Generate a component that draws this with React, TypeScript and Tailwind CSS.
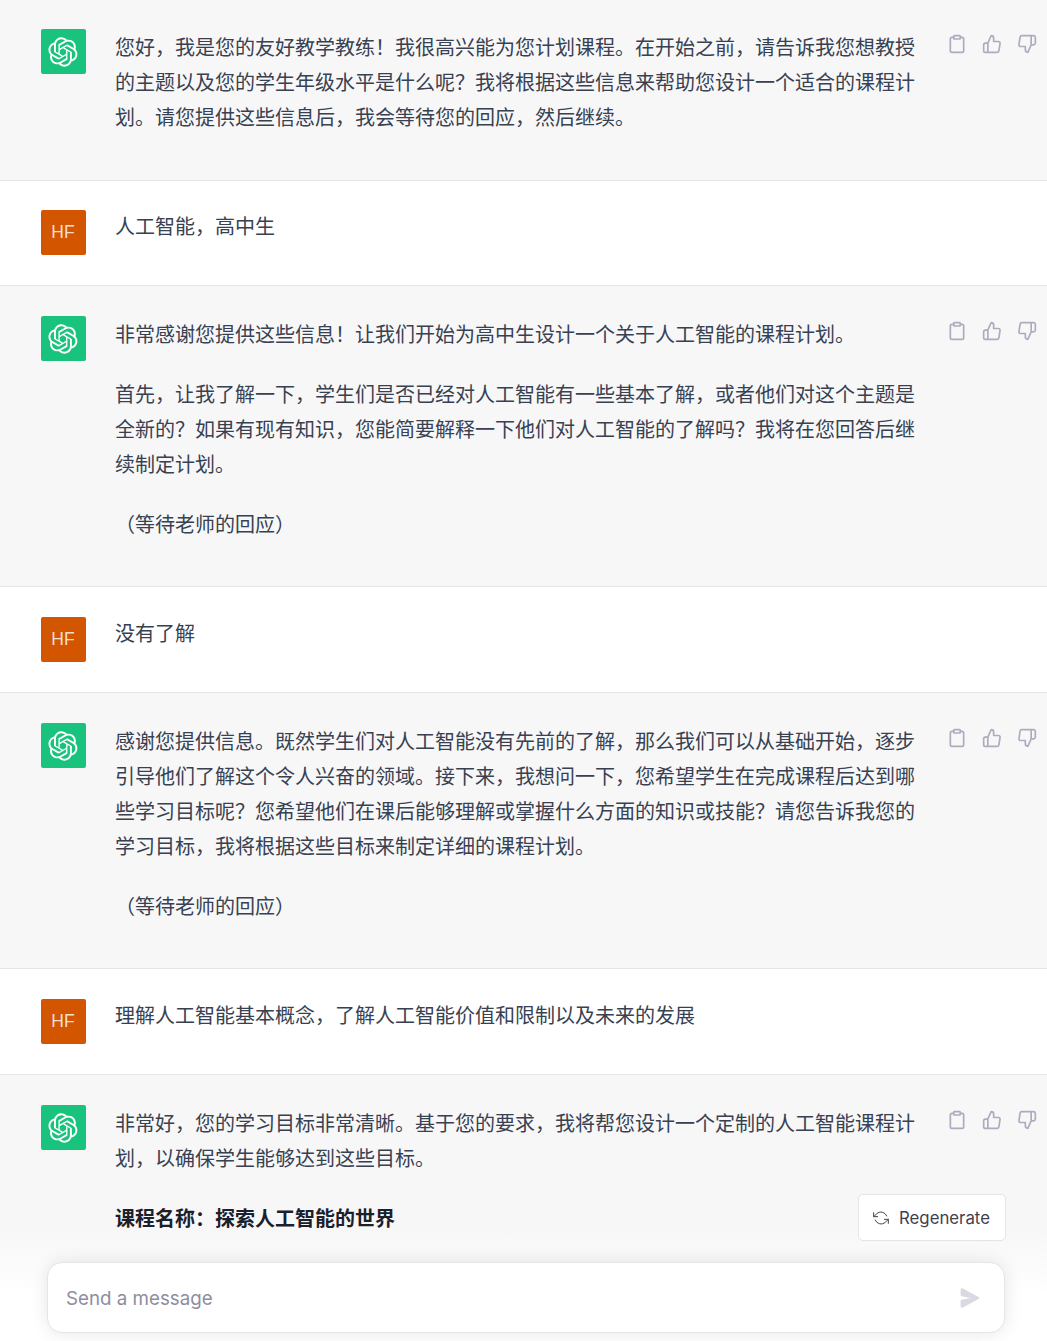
import type { ReactNode } from 'react';

const LOGO =
  'M37.5324 16.8707C37.9808 15.5241 38.1363 14.0974 37.9886 12.6859C37.8409 11.2744 37.3934 9.91076 36.676 8.68622C35.6126 6.83404 33.9882 5.3676 32.0373 4.4985C30.0864 3.62941 27.9098 3.40259 25.8215 3.85078C24.8796 2.7893 23.7219 1.94125 22.4257 1.36341C21.1295 0.785575 19.7249 0.491269 18.3058 0.500197C16.1708 0.495044 14.0893 1.16803 12.3614 2.42214C10.6335 3.67624 9.34853 5.44666 8.6917 7.47815C7.30085 7.76286 5.98686 8.3414 4.8377 9.17505C3.68854 10.0087 2.73073 11.0782 2.02839 12.312C0.956464 14.1591 0.498905 16.2988 0.721698 18.4228C0.944492 20.5467 1.83612 22.5449 3.268 24.1293C2.81966 25.4759 2.66413 26.9026 2.81182 28.3141C2.95951 29.7256 3.40701 31.0892 4.12437 32.3138C5.18791 34.1659 6.8123 35.6322 8.76321 36.5013C10.7141 37.3704 12.8907 37.5973 14.9789 37.1492C15.9208 38.2107 17.0786 39.0587 18.3747 39.6366C19.6709 40.2144 21.0755 40.5087 22.4946 40.4998C24.6307 40.5054 26.7133 39.8321 28.4418 38.5772C30.1704 37.3223 31.4556 35.5506 32.1119 33.5179C33.5027 33.2332 34.8167 32.6547 35.9659 31.821C37.115 30.9874 38.0728 29.9178 38.7752 28.684C39.8458 26.8371 40.3023 24.6979 40.0789 22.5748C39.8556 20.4517 38.9639 18.4544 37.5324 16.8707ZM22.4978 37.8849C20.7443 37.8874 19.0459 37.2733 17.6994 36.1501C17.7601 36.117 17.8666 36.0586 17.936 36.0161L25.9004 31.4156C26.1003 31.3019 26.2663 31.137 26.3813 30.9378C26.4964 30.7386 26.5563 30.5124 26.5549 30.2825V19.0542L29.9213 20.998C29.9389 21.0068 29.9541 21.0198 29.9656 21.0359C29.977 21.052 29.9842 21.0707 29.9867 21.0902V30.3889C29.9842 32.375 29.1946 34.2791 27.7909 35.6841C26.3872 37.0892 24.4838 37.8806 22.4978 37.8849ZM6.39227 31.0064C5.51397 29.4888 5.19742 27.7107 5.49804 25.9832C5.55718 26.0187 5.66048 26.0818 5.73461 26.1244L13.699 30.7248C13.8975 30.8408 14.1233 30.902 14.3532 30.902C14.583 30.902 14.8088 30.8408 15.0073 30.7248L24.731 25.1103V28.9979C24.7321 29.0177 24.7283 29.0376 24.7199 29.0556C24.7115 29.0736 24.6988 29.0893 24.6829 29.1012L16.6317 33.7497C14.9096 34.7416 12.8643 35.0097 10.9447 34.4954C9.02506 33.9811 7.38785 32.7263 6.39227 31.0064ZM4.29707 13.6194C5.17156 12.0998 6.55279 10.9364 8.19885 10.3327C8.19885 10.4013 8.19491 10.5228 8.19491 10.6071V19.808C8.19351 20.0378 8.25334 20.2638 8.36823 20.4629C8.48312 20.6619 8.64893 20.8267 8.84863 20.9404L18.5723 26.5542L15.206 28.4979C15.1894 28.5089 15.1703 28.5155 15.1505 28.5173C15.1307 28.5191 15.1107 28.516 15.0924 28.5082L7.04046 23.8557C5.32135 22.8601 4.06716 21.2235 3.55289 19.3046C3.03862 17.3858 3.30624 15.3413 4.29707 13.6194ZM31.955 20.0556L22.2312 14.4411L25.5976 12.4981C25.6142 12.4872 25.6333 12.4805 25.6531 12.4787C25.6729 12.4769 25.6928 12.4801 25.7111 12.4879L33.7631 17.1364C34.9967 17.849 36.0017 18.8982 36.6606 20.1613C37.3194 21.4244 37.6047 22.849 37.4832 24.2684C37.3617 25.6878 36.8382 27.0432 35.9743 28.1759C35.1103 29.3086 33.9415 30.1717 32.6047 30.6641C32.6047 30.5947 32.6047 30.4733 32.6047 30.3889V21.188C32.6066 20.9586 32.5474 20.7328 32.4332 20.5338C32.319 20.3348 32.154 20.1698 31.955 20.0556ZM35.3055 15.0128C35.2464 14.9765 35.1431 14.9142 35.069 14.8717L27.1045 10.2712C26.906 10.1554 26.6803 10.0943 26.4504 10.0943C26.2206 10.0943 25.9948 10.1554 25.7963 10.2712L16.0726 15.8858V11.9982C16.0715 11.9783 16.0753 11.9585 16.0837 11.9405C16.0921 11.9225 16.1048 11.9068 16.1207 11.8949L24.1719 7.25025C25.4053 6.53903 26.8158 6.19376 28.2383 6.25482C29.6608 6.31589 31.0364 6.78077 32.2044 7.59508C33.3723 8.40939 34.2842 9.53945 34.8334 10.8531C35.3826 12.1667 35.5464 13.6095 35.3055 15.0128ZM14.2424 21.9419L10.8752 19.9981C10.8576 19.9893 10.8423 19.9763 10.8309 19.9602C10.8195 19.9441 10.8122 19.9254 10.8098 19.9058V10.6071C10.8107 9.18295 11.2173 7.78848 11.9819 6.58696C12.7466 5.38544 13.8377 4.42659 15.1275 3.82264C16.4173 3.21869 17.8524 2.99464 19.2649 3.1767C20.6775 3.35876 22.0089 3.93941 23.1034 4.85067C23.0427 4.88379 22.937 4.94215 22.8668 4.98473L14.9024 9.58517C14.7025 9.69878 14.5366 9.86356 14.4215 10.0626C14.3065 10.2616 14.2466 10.4877 14.2479 10.7175L14.2424 21.9419ZM16.071 17.9991L20.4018 15.4978L24.7325 17.9975V22.9985L20.4018 25.4983L16.071 22.9985V17.9991Z';

function Avatar({ user }: { user?: boolean }) {
  if (user) {
    return (
      <div className="flex h-[45px] w-[45px] shrink-0 items-center justify-center rounded-[2px] bg-[#d45500] pr-[1px] text-[17.5px] text-[#f5dfd0] [font-family:'Liberation_Sans',sans-serif]">
        HF
      </div>
    );
  }
  return (
    <div className="flex h-[45px] w-[45px] shrink-0 items-center justify-center rounded-[2px] bg-[#19c37d] pr-[2px]">
      <svg width="30" height="30" viewBox="0 0 41 41" fill="white">
        <path d={LOGO} />
      </svg>
    </div>
  );
}

function Actions() {
  return (
    <div className="ml-[31px] flex shrink-0 gap-[15px] pt-[5px] text-[#acacbe]">
      <svg className="h-5 w-5" viewBox="0 0 24 24" fill="none" stroke="currentColor" strokeWidth="2" strokeLinecap="round" strokeLinejoin="round">
        <path d="M16 4h2a2 2 0 0 1 2 2v14a2 2 0 0 1-2 2H6a2 2 0 0 1-2-2V6a2 2 0 0 1 2-2h2" />
        <rect x="8" y="2" width="8" height="4" rx="1" ry="1" />
      </svg>
      <svg className="h-5 w-5" viewBox="0 0 24 24" fill="none" stroke="currentColor" strokeWidth="2" strokeLinecap="round" strokeLinejoin="round">
        <path d="M14 9V5a3 3 0 0 0-3-3l-4 9v11h11.28a2 2 0 0 0 2-1.7l1.38-9a2 2 0 0 0-2-2.3zM7 22H4a2 2 0 0 1-2-2v-7a2 2 0 0 1 2-2h3" />
      </svg>
      <svg className="h-5 w-5" viewBox="0 0 24 24" fill="none" stroke="currentColor" strokeWidth="2" strokeLinecap="round" strokeLinejoin="round">
        <path d="M10 15v4a3 3 0 0 0 3 3l4-9V2H5.72a2 2 0 0 0-2 1.7l-1.38 9a2 2 0 0 0 2 2.3zm7-13h2.67A2.31 2.31 0 0 1 22 4v7a2.31 2.31 0 0 1-2.33 2H17" />
      </svg>
    </div>
  );
}

function Message({ user, children, className }: { user?: boolean; children: ReactNode; className: string }) {
  return (
    <section className={`flex border-b border-[#e5e5e5] pl-[41px] ${user ? 'bg-white' : 'bg-[#f7f7f8]'} ${className}`}>
      <Avatar user={user} />
      <div className={`ml-[29px] w-[801px] shrink-0 space-y-[25px] ${user ? '-mt-[2px]' : ''}`}>{children}</div>
      {!user && <Actions />}
    </section>
  );
}

export default function App() {
  return (
    <div className="relative h-[1341px] overflow-hidden bg-white text-[20px] leading-[35px] text-[#374151] [font-family:'Noto_Sans_CJK_SC',sans-serif]">
      <Message className="h-[181px] pt-[29px]">
        <p>您好，我是您的友好教学教练！我很高兴能为您计划课程。在开始之前，请告诉我您想教授的主题以及您的学生年级水平是什么呢？我将根据这些信息来帮助您设计一个适合的课程计划。请您提供这些信息后，我会等待您的回应，然后继续。</p>
      </Message>
      <Message user className="h-[105px] pt-[29px]">
        <p>人工智能，高中生</p>
      </Message>
      <Message className="h-[301px] pt-[30px]">
        <p>非常感谢您提供这些信息！让我们开始为高中生设计一个关于人工智能的课程计划。</p>
        <p>首先，让我了解一下，学生们是否已经对人工智能有一些基本了解，或者他们对这个主题是全新的？如果有现有知识，您能简要解释一下他们对人工智能的了解吗？我将在您回答后继续制定计划。</p>
        <p>（等待老师的回应）</p>
      </Message>
      <Message user className="h-[106px] pt-[30px]">
        <p>没有了解</p>
      </Message>
      <Message className="h-[276px] pt-[30px]">
        <p>感谢您提供信息。既然学生们对人工智能没有先前的了解，那么我们可以从基础开始，逐步引导他们了解这个令人兴奋的领域。接下来，我想问一下，您希望学生在完成课程后达到哪些学习目标呢？您希望他们在课后能够理解或掌握什么方面的知识或技能？请您告诉我您的学习目标，我将根据这些目标来制定详细的课程计划。</p>
        <p>（等待老师的回应）</p>
      </Message>
      <Message user className="h-[106px] pt-[30px]">
        <p>理解人工智能基本概念，了解人工智能价值和限制以及未来的发展</p>
      </Message>
      <Message className="h-[300px] pt-[30px]">
        <p>非常好，您的学习目标非常清晰。基于您的要求，我将帮您设计一个定制的人工智能课程计划，以确保学生能够达到这些目标。</p>
        <p className="font-bold text-[#1a202c]">课程名称：探索人工智能的世界</p>
      </Message>

      {/* bottom fade with the composer on top of it */}
      <div className="absolute inset-x-0 bottom-0 flex h-[156px] flex-col bg-gradient-to-b from-transparent from-[29%] to-white to-[70%] pl-[47px] pr-[41px]">
        <button className="mb-[21px] ml-auto mt-[9px] flex h-[47px] w-[148px] items-center rounded-[5px] border border-[#e5e5e5] bg-white pl-[14px] pt-[2px] text-[16.8px] leading-none text-[#40414f] [font-family:Inter,sans-serif]">
          <svg className="mb-[2px] mr-[10px] h-4 w-4" viewBox="0 0 24 24" fill="none" stroke="currentColor" strokeWidth="1.5" strokeLinecap="round" strokeLinejoin="round">
            <polyline points="1 4 1 10 7 10" />
            <polyline points="23 20 23 14 17 14" />
            <path d="M20.49 9A9 9 0 0 0 5.64 5.64L1 10m22 4l-4.64 4.36A9 9 0 0 1 3.51 15" />
          </svg>
          Regenerate
        </button>
        <div className="mr-px flex h-[71px] items-center rounded-[15px] border border-[#e5e5e5] bg-white pl-[18px] pr-[24px] shadow-[0_0_18px_rgba(0,0,0,0.1)]">
          <input
            placeholder="Send a message"
            className="min-w-0 flex-1 bg-transparent pt-[2px] text-[18.75px] outline-none placeholder:text-[#8e8ea0] [font-family:Inter,sans-serif]"
          />
          <svg className="h-5 w-5 text-[#d9d9e3]" viewBox="0 0 16 16" fill="currentColor">
            <path d="M.5 1.163A1 1 0 0 1 1.97.28l12.868 6.837a1 1 0 0 1 0 1.766L1.969 15.72A1 1 0 0 1 .5 14.836V10.33a1 1 0 0 1 .816-.983L8.5 8 1.316 6.653A1 1 0 0 1 .5 5.67V1.163Z" />
          </svg>
        </div>
      </div>
    </div>
  );
}
